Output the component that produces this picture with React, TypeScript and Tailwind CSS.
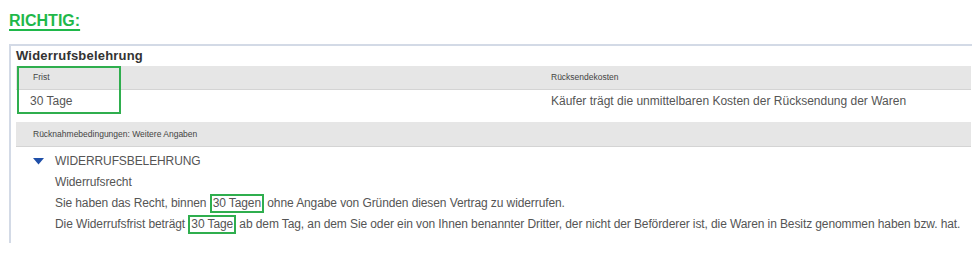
import React from 'react';

const Mark: React.FC<{ children: React.ReactNode }> = ({ children }) => (
  <span className="inline-block border-2 border-[#2fae4e] px-[1px] leading-[15px] -my-[2px]">{children}</span>
);

export default function App() {
  return (
    <div className="w-[972px] h-[261px] bg-white font-['Liberation_Sans',Arial,sans-serif] text-[#555] overflow-hidden">
      <div className="pl-[9px] pt-[9px] h-[44px]">
        <span className="text-[16px] font-bold text-[#1fb84a] underline decoration-2 underline-offset-[3px] leading-[18px]">
          RICHTIG:
        </span>
      </div>

      <div className="relative ml-[9px] border-t-2 border-l-2 border-[#d3dae6] pl-[5px] pr-[1px] h-[199px]">
        <div className="h-[20px] text-[13px] font-bold text-[#333] leading-[20px] tracking-[0.2px]">Widerrufsbelehrung</div>

        <div className="grid grid-cols-[535px_1fr] h-[24px] bg-[#e6e6e6] border-b border-[#d4d4d4] items-center text-[8.5px] text-[#444]">
          <div className="pl-[17px]">Frist</div>
          <div>Rücksendekosten</div>
        </div>
        <div className="grid grid-cols-[535px_1fr] h-[32px] pt-[3px] text-[12px] leading-[16px]">
          <div className="pl-[14px]">30 Tage</div>
          <div>Käufer trägt die unmittelbaren Kosten der Rücksendung der Waren</div>
        </div>

        <div className="h-[25px] bg-[#e6e6e6] border-b border-[#d4d4d4] flex items-center pl-[17px] text-[8.5px] text-[#444]">
          Rücknahmebedingungen: Weitere Angaben
        </div>

        <div className="pt-[4px] text-[12px] leading-[21px] whitespace-nowrap tracking-[-0.1px]">
          <div className="flex items-center">
            <svg width="11" height="7" viewBox="0 0 11 7" className="ml-[17px] mr-[11px]">
              <path d="M0 0 L11 0 L5.5 6.5 Z" fill="#1f4fa8" />
            </svg>
            <span>WIDERRUFSBELEHRUNG</span>
          </div>
          <div className="pl-[39px]">Widerrufsrecht</div>
          <div className="pl-[39px]">
            Sie haben das Recht, binnen <Mark>30 Tagen</Mark> ohne Angabe von Gründen diesen Vertrag zu widerrufen.
          </div>
          <div className="pl-[39px]">
            Die Widerrufsfrist beträgt <Mark>30 Tage</Mark> ab dem Tag, an dem Sie oder ein von Ihnen benannter Dritter, der nicht der Beförderer ist, die Waren in Besitz genommen haben bzw. hat.
          </div>
        </div>

        <div className="absolute left-[6px] top-[20px] w-[104px] h-[48px] border-[2.5px] border-[#2fae4e]" />
      </div>
    </div>
  );
}
